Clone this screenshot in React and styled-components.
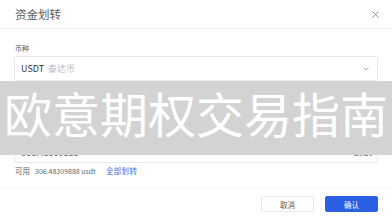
import React from 'react';
import styled, { createGlobalStyle } from 'styled-components';

const GlobalStyle = createGlobalStyle`
    html, body {
        margin: 0;
        padding: 0;
        background: #ffffff;
    }
    body {
        font-family: "Noto Sans CJK SC", "Noto Sans", sans-serif;
    }
`;

const Modal = styled.div`
    position: relative;
    width: 392px;
    height: 221px;
    background: #fff;
    overflow: hidden;
`;

const Header = styled.div`
    height: 28px;
    padding: 0 13px 0 15px;
    display: flex;
    align-items: center;
    justify-content: space-between;
    border-bottom: 1px solid #f2f2f4;

    h3 {
        margin: 0;
        font-size: 11.5px;
        font-weight: 400;
        color: #5a5a5a;
    }
`;

const Body = styled.div`
    padding: 14px 14px 0 14px;
    height: 159px;
    box-sizing: border-box;
    border-bottom: 1px solid #f4f4f6;
`;

const Label = styled.div`
    font-size: 7px;
    line-height: 10px;
    color: #555;
    margin: 0 0 3px 1px;
`;

const Field = styled.div`
    height: 25px;
    box-sizing: border-box;
    border: 1px solid #e8e9ee;
    border-radius: 2px;
    padding: 0 ${p => (p.low ? 5 : 8)}px ${p => (p.low ? 3 : 0)}px 6px;
    display: flex;
    align-items: ${p => (p.low ? 'flex-end' : 'center')};
    justify-content: space-between;
    font-size: 9px;
    line-height: 12px;
    color: #333;
    margin-bottom: ${p => p.gap || 0}px;

    .muted {
        color: #b8bcc6;
        margin-left: 4px;
    }
    .value {
        color: #555;
    }
    .unit {
        color: #666;
    }
`;

const Available = styled.div`
    display: flex;
    align-items: center;
    gap: 5px;
    margin: 3px 0 0 1px;
    font-size: 7px;
    line-height: 10px;
    color: #666;

    .cjk {
        font-size: 7.5px;
    }
    a {
        color: #3d73e6;
        font-size: 7.8px;
        margin-left: 5px;
        text-decoration: none;
    }
`;

const Footer = styled.div`
    display: flex;
    justify-content: flex-end;
    gap: 11px;
    padding: 8px 14px 0 0;
`;

const Button = styled.button`
    width: 53px;
    height: 16px;
    font-family: inherit;
    font-size: 7.5px;
    border-radius: 2px;
    padding: 0;
    cursor: pointer;
    border: 1px solid ${p => (p.primary ? '#2b5fe4' : '#e4e6ea')};
    background: ${p => (p.primary ? '#2b5fe4' : '#fff')};
    color: ${p => (p.primary ? '#fff' : '#555')};
`;

const Banner = styled.div`
    position: absolute;
    top: 81px;
    left: 0;
    right: 0;
    height: 74px;
    background: #d3d3d3;
    color: #fff;
    font-size: 48px;
    line-height: 48px;
    display: flex;
    justify-content: center;
    padding-top: 7px;
    box-sizing: border-box;
    white-space: nowrap;
`;

function CloseIcon() {
    return (
        <svg width="7" height="7" viewBox="0 0 7 7">
            <path d="M0.5 0.5 L6.5 6.5 M6.5 0.5 L0.5 6.5" stroke="#8a8f9c" strokeWidth="1" />
        </svg>
    );
}

function Chevron() {
    return (
        <svg width="6" height="4" viewBox="0 0 6 4">
            <path d="M0.5 0.5 L3 3 L5.5 0.5" fill="none" stroke="#9aa0ab" strokeWidth="0.9" />
        </svg>
    );
}

export default function App() {
    return (
        <>
            <GlobalStyle />
            <Modal>
                <Header>
                    <h3>资金划转</h3>
                    <CloseIcon />
                </Header>
                <Body>
                    <Label>币种</Label>
                    <Field gap={57}>
                        <span>USDT<span className="muted">泰达币</span></span>
                        <Chevron />
                    </Field>
                    <Field low>
                        <span className="value">306.48309888</span>
                        <span className="unit">usdt</span>
                    </Field>
                    <Available>
                        <span className="cjk">可用</span>
                        <span>306.48309888 usdt</span>
                        <a href="#">全部划转</a>
                    </Available>
                </Body>
                <Footer>
                    <Button>取消</Button>
                    <Button primary>确认</Button>
                </Footer>
                <Banner>欧意期权交易指南</Banner>
            </Modal>
        </>
    );
}
